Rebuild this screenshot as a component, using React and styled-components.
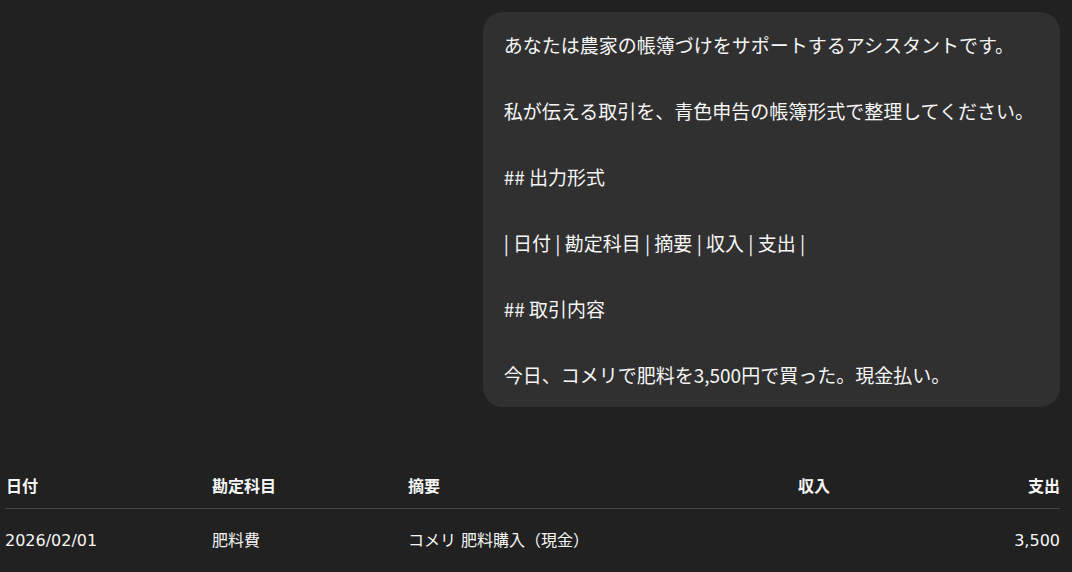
import React from 'react';
import styled, { createGlobalStyle } from 'styled-components';

const GlobalStyle = createGlobalStyle`
  html, body {
    margin: 0;
    padding: 0;
    background: #212121;
  }
  body {
    font-family: 'Open Sans', 'Noto Sans CJK JP', sans-serif;
    color: #ececec;
  }
`;

const Page = styled.div`
  min-height: 100vh;
  background: #212121;
  padding: 12px 12px 0 5px;
  box-sizing: border-box;
  display: flex;
  flex-direction: column;
`;

const MessageRow = styled.div`
  display: flex;
  justify-content: flex-end;
`;

const Bubble = styled.div`
  background: #303030;
  border-radius: 20px;
  padding: 16px 26px 16px 21px;
  max-width: 560px;
  color: #f6f6f6;
  font-family: 'Noto Sans CJK JP', sans-serif;
  font-size: 19px;
  line-height: 33px;
  white-space: pre-wrap;
`;

const Table = styled.div`
  margin-top: 68px;
  display: grid;
  grid-template-columns: 207px 196px 1fr 130px 222px;
  font-family: 'DejaVu Sans', 'Noto Sans CJK JP', sans-serif;
  font-size: 16px;
  color: #f6f6f6;
`;

const HeadCell = styled.div`
  font-weight: 700;
  line-height: 24px;
  padding: 0 ${(p) => (p.$pad ? '8px' : '0')} 9px ${(p) => (p.$first ? '1px' : '0')};
  text-align: ${(p) => (p.$right ? 'right' : 'left')};
  border-bottom: 1px solid #474747;
`;

const Cell = styled.div`
  line-height: 24px;
  padding: 20px ${(p) => (p.$pad ? '8px' : '0')} 0 0;
  text-align: ${(p) => (p.$right ? 'right' : 'left')};
`;

const prompt = `あなたは農家の帳簿づけをサポートするアシスタントです。

私が伝える取引を、青色申告の帳簿形式で整理してください。

## 出力形式

| 日付 | 勘定科目 | 摘要 | 収入 | 支出 |

## 取引内容

今日、コメリで肥料を3,500円で買った。現金払い。`;

const columns = [
  { label: '日付', first: true },
  { label: '勘定科目' },
  { label: '摘要' },
  { label: '収入', right: true, pad: true },
  { label: '支出', right: true },
];

const rows = [['2026/02/01', '肥料費', 'コメリ 肥料購入（現金）', '', '3,500']];

export default function App() {
  return (
    <>
      <GlobalStyle />
      <Page>
        <MessageRow>
          <Bubble>{prompt}</Bubble>
        </MessageRow>
        <Table>
          {columns.map((c) => (
            <HeadCell key={c.label} $first={c.first} $right={c.right} $pad={c.pad}>
              {c.label}
            </HeadCell>
          ))}
          {rows.map((r, i) =>
            r.map((v, j) => (
              <Cell key={`${i}-${j}`} $right={columns[j].right} $pad={columns[j].pad}>
                {v}
              </Cell>
            ))
          )}
        </Table>
      </Page>
    </>
  );
}
